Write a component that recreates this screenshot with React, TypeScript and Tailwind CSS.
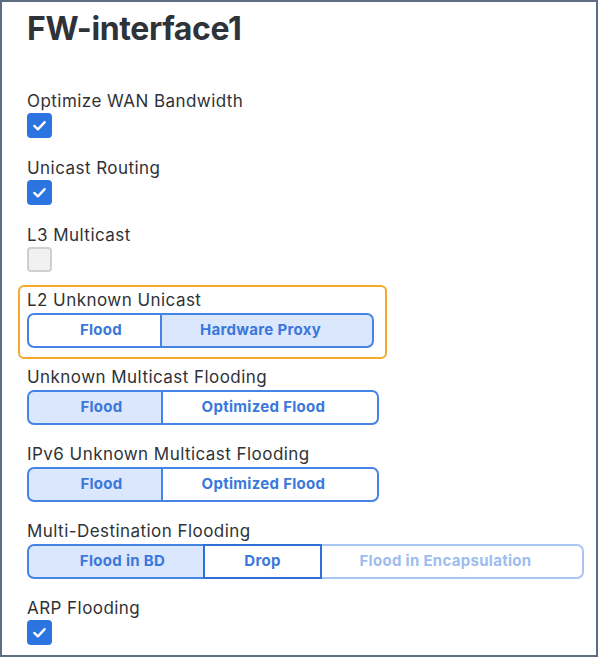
import React from "react";

function Check({ checked }: { checked: boolean }) {
  if (checked) {
    return (
      <div className="mt-[2px] w-[25px] h-[25px] rounded-[4px] bg-[#2c74df] flex items-center justify-center">
        <svg width="25" height="25" viewBox="0 0 25 25" fill="none">
          <path d="M7.3 12.9 L10.9 16.4 L17.7 9.1" stroke="white" strokeWidth="2.3" strokeLinecap="round" strokeLinejoin="round" />
        </svg>
      </div>
    );
  }
  return <div className="mt-[2px] w-[25px] h-[25px] rounded-[4px] bg-[#f1f1f1] border-2 border-[#cfcfcf]" />;
}

function Label({ children }: { children: React.ReactNode }) {
  return <div className="text-[17px] leading-[20px] tracking-[0.45px] text-[#2f3237]">{children}</div>;
}

type Seg = { label: string; w: number; selected?: boolean; disabled?: boolean; focus?: boolean };

function Segmented({ segs }: { segs: Seg[] }) {
  return (
    <div className="mt-[3px] flex h-[35px]">
      {segs.map((s, i) => {
        const first = i === 0;
        const last = i === segs.length - 1;
        let cls = "flex items-center justify-center text-[15px] tracking-[0.3px] font-bold border-2 ";
        cls += first ? "rounded-l-[7px] pl-[13px] " : "";
        cls += last ? "rounded-r-[7px] pr-[13px] " : "";
        cls += !first ? "-ml-[2px] " : "";
        if (s.disabled) cls += "border-[#a9c6f3] text-[#9dbdf0] bg-white ";
        else if (s.focus) cls += "border-[#2f6fd6] text-[#3a78dc] bg-white relative z-10 ";
        else if (s.selected) cls += "border-[#4484e6] text-[#3a78dc] bg-[#dbe7fc] ";
        else cls += "border-[#4484e6] text-[#3a78dc] bg-white ";
        return (
          <div key={i} className={cls} style={{ width: s.w }}>
            {s.label}
          </div>
        );
      })}
    </div>
  );
}

export default function App() {
  return (
    <div className="w-[600px] h-[659px] bg-white" style={{ fontFamily: "Inter, 'Noto Sans', sans-serif" }}>
      <div className="w-[598px] h-[657px] border-2 border-[#5f6d84] pl-[25px] pt-[7px]">
        <div className="text-[32px] leading-[40px] font-bold tracking-[-0.4px] text-[#2e333a]">FW-interface1</div>

        <div className="mt-[42px] flex flex-col">
          <Label>Optimize WAN Bandwidth</Label>
          <Check checked />
        </div>
        <div className="mt-[20px] flex flex-col">
          <Label>Unicast Routing</Label>
          <Check checked />
        </div>
        <div className="mt-[20px] flex flex-col">
          <Label>L3 Multicast</Label>
          <Check checked={false} />
        </div>

        <div className="mt-[13px] -ml-[9px] w-[369px] border-2 border-[#f5a82a] rounded-[6px] pl-[7px] pt-[3px] pb-[9px]">
          <Label>L2 Unknown Unicast</Label>
          <Segmented
            segs={[
              { label: "Flood", w: 135 },
              { label: "Hardware Proxy", w: 214, selected: true },
            ]}
          />
        </div>

        <div className="mt-[8px] flex flex-col">
          <Label>Unknown Multicast Flooding</Label>
          <Segmented
            segs={[
              { label: "Flood", w: 136, selected: true },
              { label: "Optimized Flood", w: 218 },
            ]}
          />
        </div>

        <div className="mt-[19px] flex flex-col">
          <Label>IPv6 Unknown Multicast Flooding</Label>
          <Segmented
            segs={[
              { label: "Flood", w: 136, selected: true },
              { label: "Optimized Flood", w: 218 },
            ]}
          />
        </div>

        <div className="mt-[19px] flex flex-col">
          <Label>Multi-Destination Flooding</Label>
          <Segmented
            segs={[
              { label: "Flood in BD", w: 178, selected: true },
              { label: "Drop", w: 119, focus: true },
              { label: "Flood in Encapsulation", w: 264, disabled: true },
            ]}
          />
        </div>

        <div className="mt-[19px] flex flex-col">
          <Label>ARP Flooding</Label>
          <Check checked />
        </div>
      </div>
    </div>
  );
}
